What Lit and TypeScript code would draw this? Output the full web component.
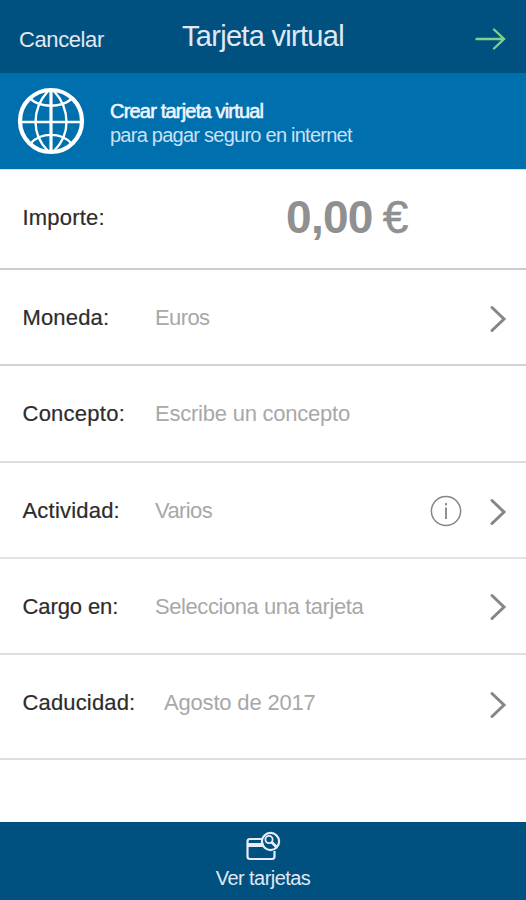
import { LitElement, html, css, svg, nothing } from "lit";
import { customElement } from "lit/decorators.js";
import { styleMap } from "lit/directives/style-map.js";

interface Field {
  label: string;
  labelSpacing: number;
  value: string;
  valueSpacing: number;
  height: number;
  line: string;
  inset?: number;
  info?: boolean;
  chevron?: number;
}

const FIELDS: Field[] = [
  { label: "Moneda:", labelSpacing: 0.15, value: "Euros", valueSpacing: -0.6, height: 96, line: "#d2d2d2", chevron: 49 },
  { label: "Concepto:", labelSpacing: 0.25, value: "Escribe un concepto", valueSpacing: -0.23, height: 97, line: "#dddddd" },
  { label: "Actividad:", labelSpacing: 0.2, value: "Varios", valueSpacing: -0.6, height: 96, line: "#e4e4e4", info: true, chevron: 49 },
  { label: "Cargo en:", labelSpacing: -0.1, value: "Selecciona una tarjeta", valueSpacing: -0.43, height: 96, line: "#e0e0e0", chevron: 48 },
  { label: "Caducidad:", labelSpacing: 0.15, value: "Agosto de 2017", valueSpacing: -0.18, height: 105, line: "#dedede", inset: 9, chevron: 50 },
];

const globe = svg`
  <g fill="none" stroke="#fff">
    <circle cx="34" cy="34" r="31" stroke-width="4.2"/>
    <path stroke-width="3.2" d="M34 3V65"/>
    <path stroke-width="2.4" d="M3 35H65M31 4C22 14 18.500 24 18.500 35S22 55 31 64M37 4C46 14 49.500 24 49.500 35S46 55 37 64M13.500 12C24 21 44 21 54.500 12M13.500 56.500C24 45 44 45 54.500 56.500"/>
  </g>`;

@customElement("app-root")
export class AppRoot extends LitElement {
  static styles = css`
    :host {
      display: flex;
      flex-direction: column;
      width: 526px;
      height: 900px;
      overflow: hidden;
      background: #fff;
      font-family: "Liberation Sans", Arial, sans-serif;
      font-size: 22px;
      line-height: 25px;
      white-space: nowrap;
    }
    svg { display: block; flex: none; }
    .header {
      display: grid;
      grid-template-columns: 182px 1fr 52px;
      height: 73px;
      background: #00517f;
      color: #e0e8f3;
    }
    .cancel { padding: 27px 0 0 19px; letter-spacing: -0.4px; }
    .title {
      margin: 0;
      padding-top: 20px;
      font-weight: 400;
      font-size: 29px;
      line-height: 33px;
      letter-spacing: -0.7px;
    }
    .arrow { margin-top: 27px; }
    .banner {
      display: flex;
      box-sizing: border-box;
      height: 97px;
      padding-left: 17px;
      background: #006fae;
      border-bottom: 1px solid #cfe3f8;
      color: #cbe1f4;
    }
    .globe { margin-top: 14px; }
    .copy { padding: 26px 0 0 25px; font-size: 20px; line-height: 24px; }
    .copy p { margin: 0; }
    .copy .lead {
      color: #eef6fd;
      letter-spacing: -0.8px;
      -webkit-text-stroke: 0.6px #eef6fd;
    }
    .copy .sub { letter-spacing: -0.75px; }
    .row {
      display: flex;
      box-sizing: border-box;
      border-bottom: 2px solid #ccc;
      padding-left: 22.500px;
    }
    .label {
      width: 132.500px;
      padding-top: 35px;
      color: #2c2c2c;
      -webkit-text-stroke: 0.2px #2c2c2c;
    }
    .value { flex: 1; padding-top: 35px; color: #a8a8a8; }
    .importe { height: 100px; }
    .importe .label { letter-spacing: 0.2px; }
    .amount {
      display: flex;
      padding: 21px 0 0 131px;
      font-size: 46px;
      line-height: 52px;
      color: #909090;
    }
    .digits { font-weight: 700; letter-spacing: -0.7px; }
    .euro { padding-left: 10px; -webkit-text-stroke: 0.5px #909090; }
    .info { margin: 32px 27px 0 0; }
    .chevron { margin-right: 19px; }
    .footer {
      display: flex;
      flex-direction: column;
      align-items: center;
      box-sizing: border-box;
      height: 78px;
      margin-top: auto;
      padding-top: 8px;
      background: #00517f;
      color: #e0e8f3;
      font-size: 20px;
      line-height: 24px;
      letter-spacing: -0.55px;
    }
    .footer .caption { padding-top: 4px; }
  `;

  private renderField(f: Field) {
    return html`
      <div class="row" style=${styleMap({ height: `${f.height}px`, borderColor: f.line })}>
        <div class="label" style=${styleMap({ letterSpacing: `${f.labelSpacing}px` })}>${f.label}</div>
        <div class="value" style=${styleMap({ letterSpacing: `${f.valueSpacing}px`, paddingLeft: `${f.inset ?? 0}px` })}>${f.value}</div>
        ${f.info
          ? html`<svg class="info" width="32" height="32" viewBox="0 0 32 32" fill="none" stroke="#858585">
              <circle cx="16" cy="16" r="14.600" stroke-width="1.500"/>
              <path d="M16 12.500V24M16 8V10.500" stroke-width="1.800"/>
            </svg>`
          : nothing}
        ${f.chevron
          ? html`<svg class="chevron" style=${styleMap({ marginTop: `${f.chevron - 15}px` })} width="18" height="30" viewBox="0 0 18 30" fill="none" stroke="#868686" stroke-width="3" stroke-linecap="round">
              <path d="M3 3.500L15 15L3 26.500"/>
            </svg>`
          : nothing}
      </div>`;
  }

  render() {
    return html`
      <div class="header">
        <div class="cancel">Cancelar</div>
        <h1 class="title">Tarjeta virtual</h1>
        <svg class="arrow" width="34" height="24" viewBox="0 0 34 24" fill="none" stroke="#7fd08a" stroke-width="2.400" stroke-linecap="round">
          <path d="M2.500 12H30M20 2.500L30 12L20 21.500"/>
        </svg>
      </div>
      <div class="banner">
        <svg class="globe" width="68" height="68" viewBox="0 0 68 68">${globe}</svg>
        <div class="copy">
          <p class="lead">Crear tarjeta virtual</p>
          <p class="sub">para pagar seguro en internet</p>
        </div>
      </div>
      <div class="row importe">
        <div class="label">Importe:</div>
        <div class="amount"><span class="digits">0,00</span><span class="euro">€</span></div>
      </div>
      ${FIELDS.map((f) => this.renderField(f))}
      <div class="footer">
        <svg width="36" height="32" viewBox="0 0 36 32" fill="none" stroke="#e6edf6">
          <path stroke-width="2.200" d="M17 9H5Q2.500 9 2.500 11.500V26.500Q2.500 29 5 29H27Q29.500 29 29.500 26.500V21"/>
          <path stroke-width="4" d="M2.500 15H18.500"/>
          <circle cx="25.500" cy="11.500" r="8.600" stroke-width="2.200"/>
          <circle cx="24" cy="9.500" r="3.600" stroke-width="1.800"/>
          <path stroke-width="2.800" d="M26.500 12L31.500 17"/>
        </svg>
        <div class="caption">Ver tarjetas</div>
      </div>`;
  }
}
